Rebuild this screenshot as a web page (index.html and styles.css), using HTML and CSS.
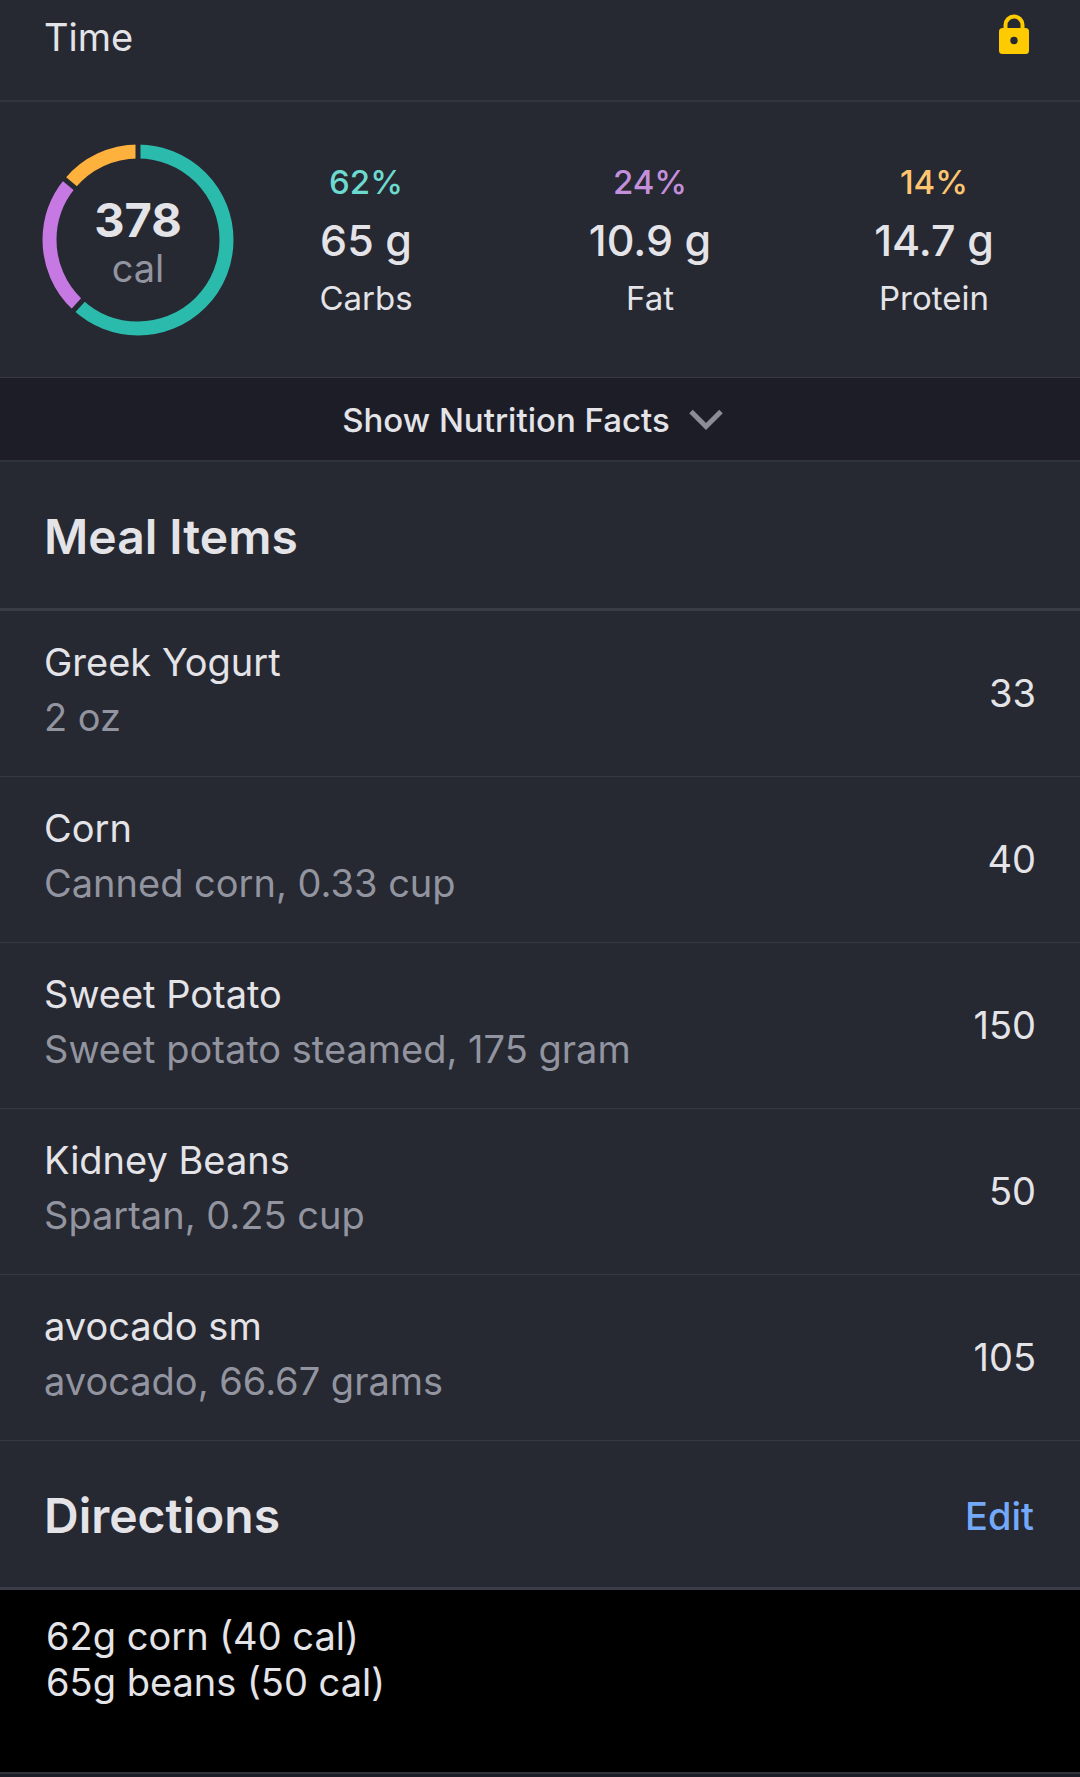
FILE: index.html
```
<!DOCTYPE html>
<html lang="en">
<head>
    <meta charset="UTF-8">
    <meta name="viewport" content="width=device-width, initial-scale=1.0">
    <title>Meal</title>
    <link rel="stylesheet" href="styles.css">
</head>
<body>
    <div class="time-row">
        <span>Time</span>
        <svg class="lock" viewBox="0 0 40 48" role="img" aria-label="Locked">
            <path d="M11.5 18V12a8.5 8.5 0 0 1 17 0v6" fill="none" stroke="#fecb00" stroke-width="4"/>
            <rect x="5" y="15" width="30" height="26" rx="3.5" fill="#fecb00"/>
            <circle cx="20" cy="27.5" r="3.7" fill="#262832"/>
        </svg>
    </div>

    <section class="summary">
        <div class="ring">
            <svg viewBox="0 0 192 192" aria-hidden="true">
                <g fill="none" stroke-width="14" transform="rotate(-90 96 96)">
                    <circle cx="96" cy="96" r="88.5" pathLength="100" stroke="#2bbbad" stroke-dasharray="62 38"/>
                    <circle cx="96" cy="96" r="88.5" pathLength="100" stroke="#c678e3" stroke-dasharray="24 76" stroke-dashoffset="-62"/>
                    <circle cx="96" cy="96" r="88.5" pathLength="100" stroke="#ffb13d" stroke-dasharray="14 86" stroke-dashoffset="-86"/>
                </g>
                <!-- gaps between the segments -->
                <g stroke="#262832" stroke-width="5">
                    <path d="M96 20V-2"/>
                    <path d="M96 20V-2" transform="rotate(222.5 96 96)"/>
                    <path d="M96 20V-2" transform="rotate(309.6 96 96)"/>
                </g>
            </svg>
            <div class="ring-label">
                <strong>378</strong>
                <span>cal</span>
            </div>
        </div>
        <div class="macros">
            <div class="macro carbs">
                <span class="percent">62%</span>
                <span class="amount">65 g</span>
                <span class="name">Carbs</span>
            </div>
            <div class="macro fat">
                <span class="percent">24%</span>
                <span class="amount">10.9 g</span>
                <span class="name">Fat</span>
            </div>
            <div class="macro protein">
                <span class="percent">14%</span>
                <span class="amount">14.7 g</span>
                <span class="name">Protein</span>
            </div>
        </div>
    </section>

    <button type="button" class="facts-btn">
        Show Nutrition Facts
        <svg viewBox="0 0 64 32" aria-hidden="true">
            <path d="M17 7.5l15 15 15-15" fill="none" stroke="#8b8c96" stroke-width="5"/>
        </svg>
    </button>

    <div class="section-header">
        <h2>Meal Items</h2>
    </div>
    <ul class="items">
        <li>
            <div class="item-text">
                <div class="item-name">Greek Yogurt</div>
                <div class="item-detail">2 oz</div>
            </div>
            <span>33</span>
        </li>
        <li>
            <div class="item-text">
                <div class="item-name">Corn</div>
                <div class="item-detail">Canned corn, 0.33 cup</div>
            </div>
            <span>40</span>
        </li>
        <li>
            <div class="item-text">
                <div class="item-name">Sweet Potato</div>
                <div class="item-detail">Sweet potato steamed, 175 gram</div>
            </div>
            <span>150</span>
        </li>
        <li>
            <div class="item-text">
                <div class="item-name">Kidney Beans</div>
                <div class="item-detail">Spartan, 0.25 cup</div>
            </div>
            <span>50</span>
        </li>
        <li>
            <div class="item-text">
                <div class="item-name">avocado sm</div>
                <div class="item-detail">avocado, 66.67 grams</div>
            </div>
            <span>105</span>
        </li>
    </ul>

    <div class="section-header">
        <h2>Directions</h2>
        <button type="button" class="edit-btn">Edit</button>
    </div>
    <p class="directions">62g corn (40 cal)<br>65g beans (50 cal)</p>
</body>
</html>
```
FILE: styles.css
```
* {
    box-sizing: border-box;
}
body {
    margin: 0;
    background-color: #1c1d27;
    color: #e4e4e8;
    font-family: Inter, "Liberation Sans", sans-serif;
    font-size: 38px;
    line-height: 48px;
}
button {
    border: none;
    padding: 0;
    font-family: inherit;
    cursor: pointer;
}
.time-row {
    display: flex;
    justify-content: space-between;
    padding: 13px 46px 39px 44px;
    background-color: #262832;
    border-bottom: 2px solid #32343e;
}
.lock {
    width: 40px;
    height: 48px;
}
.summary {
    display: flex;
    align-items: center;
    padding: 42px 14px 41px 42px;
    background-color: #262832;
}
.ring {
    display: grid;
    width: 192px;
    height: 192px;
}
.ring svg,
.ring-label {
    grid-area: 1 / 1;
}
.ring-label {
    display: flex;
    flex-direction: column;
    justify-content: center;
    padding-top: 8px;
    text-align: center;
    color: #92949f;
}
.ring-label strong {
    font-size: 47px;
    color: #e4e4e8;
}
.macros {
    flex: 1;
    display: grid;
    grid-template-columns: repeat(3, 1fr);
    column-gap: 20px;
}
.macro {
    display: flex;
    flex-direction: column;
    text-align: center;
    font-size: 33px;
    line-height: 58px;
}
.percent {
    font-weight: 500;
}
.amount {
    font-size: 43px;
    font-weight: 500;
}
.carbs .percent {
    color: #6ddacf;
}
.fat .percent {
    color: #c48fdb;
}
.protein .percent {
    color: #ffc670;
}
.facts-btn {
    display: flex;
    align-items: center;
    justify-content: center;
    gap: 4px;
    width: 100%;
    padding: 18px 0 16px;
    background-color: #1c1d27;
    border-top: 1px solid #363842;
    border-bottom: 2px solid #30323c;
    color: #e4e4e8;
    font-size: 33px;
    font-weight: 500;
    line-height: 48px;
}
.facts-btn svg {
    width: 64px;
    height: 32px;
}
.section-header {
    display: flex;
    align-items: center;
    justify-content: space-between;
    padding: 46px 46px 42px 44px;
    background-color: #262832;
    border-bottom: 3px solid #3a3c47;
}
h2 {
    margin: 0;
    font-size: 48px;
    font-weight: 600;
    line-height: 58px;
}
.items {
    margin: 0;
    padding: 0;
    list-style: none;
}
.items li {
    display: flex;
    align-items: center;
    justify-content: space-between;
    padding: 0 44px;
    background-color: #262832;
    border-bottom: 1px solid #363842;
    line-height: 55px;
}
.item-text {
    padding: 24px 0 31px;
}
.item-detail {
    color: #92949f;
}
.edit-btn {
    background: none;
    color: #74a9fa;
    font-size: 38px;
    font-weight: 500;
    line-height: 48px;
}
.directions {
    margin: 0;
    padding: 23px 46px 67px;
    background-color: #000;
    border-bottom: 2px solid #30323c;
    line-height: 46px;
}
```
